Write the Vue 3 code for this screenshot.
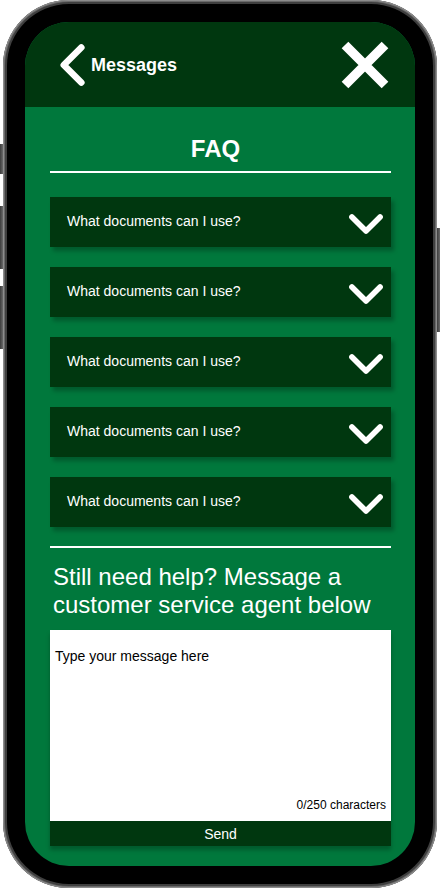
<script setup>
import { ref } from 'vue'

const questions = ref(
  Array.from({ length: 5 }, (_, i) => ({ id: i + 1, text: 'What documents can I use?' }))
)
const message = ref('')
const limit = 250
</script>

<template>
  <div class="stage">
    <div class="phone">
      <span class="key key-mute"></span>
      <span class="key key-up"></span>
      <span class="key key-down"></span>
      <span class="key key-power"></span>
      <div class="bezel">
        <div class="screen">
          <header class="top">
            <button class="back" type="button">
              <svg width="26" height="44" viewBox="0 0 26 44" aria-hidden="true">
                <path d="M22.3 4.5 L4.8 22 L22.3 39.5" fill="none" stroke="#fff" stroke-width="6.6" stroke-linecap="round" stroke-linejoin="round" />
              </svg>
              <span>Messages</span>
            </button>
            <button class="close" type="button" aria-label="Close">
              <svg width="48" height="48" viewBox="0 0 48 48" aria-hidden="true">
                <path d="M4 4 L44 44 M44 4 L4 44" fill="none" stroke="#fff" stroke-width="9.4" />
              </svg>
            </button>
          </header>

          <main class="content">
            <h1 class="title">FAQ</h1>
            <ul class="faq">
              <li v-for="q in questions" :key="q.id">
                <button class="question" type="button">
                  <span>{{ q.text }}</span>
                  <svg width="34" height="22" viewBox="0 0 34 22" aria-hidden="true">
                    <path d="M2.9 4 L17 18 L31.1 4" fill="none" stroke="#fff" stroke-width="5.6" stroke-linecap="round" stroke-linejoin="round" />
                  </svg>
                </button>
              </li>
            </ul>
            <form class="help" @submit.prevent>
              <label class="prompt" for="message">Still need help? Message a customer service agent below</label>
              <div class="composer">
                <div class="field">
                  <textarea id="message" v-model="message" :maxlength="limit" placeholder="Type your message here"></textarea>
                  <span class="count">{{ message.length }}/{{ limit }} characters</span>
                </div>
                <button class="send" type="submit">Send</button>
              </div>
            </form>
          </main>
        </div>
      </div>
    </div>
  </div>
</template>

<style>
body {
  margin: 0;
  background: #fff;
}
</style>

<style scoped>
* {
  box-sizing: border-box;
}

.stage {
  min-height: 100vh;
  display: flex;
  padding: 0 3px;
  font-family: "Liberation Sans", Arial, sans-serif;
  color: #fff;
}

.phone {
  position: relative;
  flex: 1;
  display: flex;
  padding: 4px;
  border-radius: 66px;
  background: #3f3f3f;
  box-shadow: inset 0 0 0 1px #8c8c8c, inset 0 0 0 2px #6a6a6a;
}

.key {
  position: absolute;
  left: -3px;
  width: 3px;
  background: linear-gradient(90deg, #3c3c3c, #6a6a6a);
}

.key-mute {
  top: 144px;
  height: 30px;
}

.key-up {
  top: 206px;
  height: 63px;
}

.key-down {
  top: 286px;
  height: 63px;
}

.key-power {
  top: 228px;
  left: auto;
  right: -3px;
  height: 104px;
}

.bezel {
  flex: 1;
  display: flex;
  padding: 18px;
  border-radius: 62px;
  background: #000;
}

.screen {
  flex: 1;
  display: flex;
  flex-direction: column;
  overflow: hidden;
  border-radius: 44px;
  background: #00783c;
}

button {
  margin: 0;
  border: 0;
  padding: 0;
  background: none;
  color: inherit;
  font: inherit;
  cursor: pointer;
}

svg {
  display: block;
}

.top {
  display: flex;
  align-items: center;
  justify-content: space-between;
  height: 85px;
  padding: 0 26px 0 34px;
  background: #00370f;
}

.back {
  display: flex;
  align-items: center;
  gap: 6px;
  font-size: 18px;
  font-weight: 700;
}

.back span {
  padding-top: 2px;
}

.content {
  flex: 1;
  display: flex;
  flex-direction: column;
  padding: 28px 24px 20px 25px;
}

.title {
  margin: 0;
  padding: 0 10px 8px 0;
  border-bottom: 2px solid #fff;
  font-size: 24px;
  line-height: 28px;
  text-align: center;
}

.faq {
  display: grid;
  gap: 20px;
  margin: 0;
  padding: 24px 0 19px;
  list-style: none;
}

.question {
  display: flex;
  align-items: center;
  justify-content: space-between;
  width: 100%;
  height: 50px;
  padding: 0 8px 0 17px;
  background: #00370f;
  box-shadow: 3px 4px 4px rgba(0, 0, 0, 0.25);
  font-size: 14px;
}

.question span {
  padding-bottom: 2px;
}

.question svg {
  margin-top: 4px;
}

.help {
  flex: 1;
  display: flex;
  flex-direction: column;
  border-top: 2px solid #fff;
}

.prompt {
  padding: 15px 3px 11px;
  font-size: 24px;
  line-height: 28px;
}

.composer {
  flex: 1;
  display: flex;
  flex-direction: column;
  box-shadow: 0 4px 4px rgba(0, 0, 0, 0.25);
}

.field {
  flex: 1;
  display: flex;
  flex-direction: column;
  background: #fff;
  color: #000;
}

textarea {
  flex: 1;
  width: 100%;
  border: 0;
  padding: 18px 5px 0;
  outline: 0;
  resize: none;
  background: transparent;
  color: #000;
  font: inherit;
  font-size: 14px;
  line-height: 16px;
}

textarea::placeholder {
  color: #000;
  opacity: 1;
}

.count {
  padding: 0 5px 9px;
  font-size: 12px;
  line-height: 14px;
  text-align: right;
}

.send {
  height: 25px;
  background: #00370f;
  font-size: 14px;
}
</style>
